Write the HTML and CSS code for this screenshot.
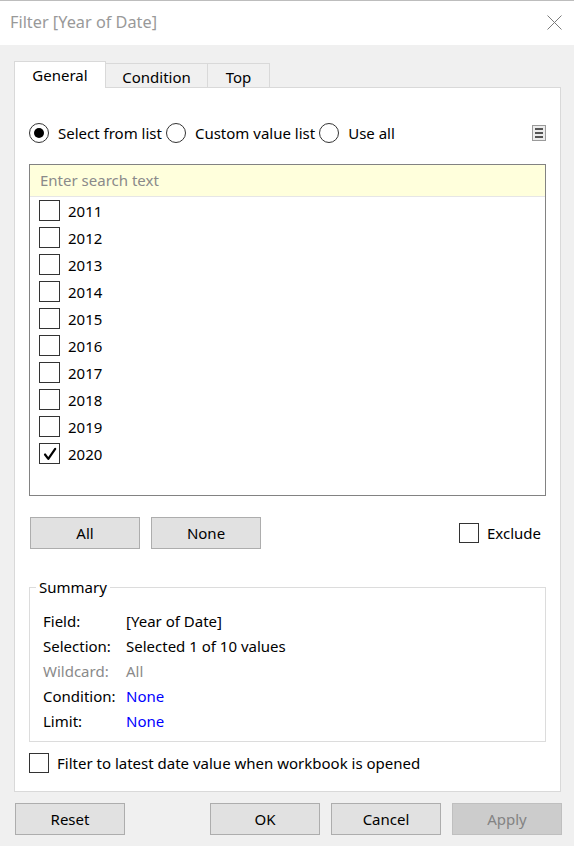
FILE: index.html
```html
<!DOCTYPE html>
<html>
<head>
<meta charset="utf-8">
<link rel="stylesheet" href="styles.css">
</head>
<body>
<div class="window">
  <div class="titlebar">
    <span class="title">Filter [Year of Date]</span>
    <svg class="close" width="15" height="15" viewBox="0 0 15 15"><path d="M0.5 0.5 L14.5 14.5 M14.5 0.5 L0.5 14.5" stroke="#7a7a7a" stroke-width="1" fill="none"/></svg>
  </div>
  <div class="main">
    <div class="tabs">
      <div class="tab active">General</div>
      <div class="tab tab-condition">Condition</div>
      <div class="tab tab-top">Top</div>
    </div>
    <div class="panel">
      <div class="radio-row">
        <div class="radio-opt"><span class="radio checked"></span><span>Select from list</span></div>
        <div class="radio-opt"><span class="radio"></span><span>Custom value list</span></div>
        <div class="radio-opt"><span class="radio"></span><span>Use all</span></div>
        <div class="menu-btn"><span></span><span></span><span></span></div>
      </div>
      <div class="listbox">
        <div class="search">Enter search text</div>
        <div class="items">
          <div class="item"><span class="cb"></span><span>2011</span></div>
          <div class="item"><span class="cb"></span><span>2012</span></div>
          <div class="item"><span class="cb"></span><span>2013</span></div>
          <div class="item"><span class="cb"></span><span>2014</span></div>
          <div class="item"><span class="cb"></span><span>2015</span></div>
          <div class="item"><span class="cb"></span><span>2016</span></div>
          <div class="item"><span class="cb"></span><span>2017</span></div>
          <div class="item"><span class="cb"></span><span>2018</span></div>
          <div class="item"><span class="cb"></span><span>2019</span></div>
          <div class="item"><span class="cb"><svg width="20" height="20" viewBox="0 0 20 20"><path d="M5 10.5 L8.3 14.8 L15.2 4.8" stroke="#000" stroke-width="2.2" fill="none" stroke-linecap="round" stroke-linejoin="round"/></svg></span><span>2020</span></div>
        </div>
      </div>
      <div class="btn-row">
        <button class="btn">All</button>
        <button class="btn">None</button>
        <label class="exclude"><span class="cb"></span><span>Exclude</span></label>
      </div>
      <fieldset class="summary">
        <legend>Summary</legend>
        <div class="sum-grid">
          <span>Field:</span><span>[Year of Date]</span>
          <span>Selection:</span><span>Selected 1 of 10 values</span>
          <span class="muted">Wildcard:</span><span class="muted">All</span>
          <span>Condition:</span><span class="link">None</span>
          <span>Limit:</span><span class="link">None</span>
        </div>
      </fieldset>
      <div class="latest"><span class="cb"></span><span>Filter to latest date value when workbook is opened</span></div>
    </div>
    <div class="footer">
      <button class="btn">Reset</button>
      <div class="footer-right">
        <button class="btn">OK</button>
        <button class="btn">Cancel</button>
        <button class="btn disabled">Apply</button>
      </div>
    </div>
  </div>
</div>
</body>
</html>
```
FILE: styles.css
```css
* { box-sizing: border-box; }
html, body { margin: 0; padding: 0; }
body {
  width: 574px;
  height: 846px;
  background: #f0f0f0;
  font-family: "Noto Sans", "Open Sans", sans-serif;
  font-size: 15px;
  line-height: 20px;
  color: #000;
  overflow: hidden;
}
.window { width: 574px; height: 846px; }

.titlebar {
  height: 45px;
  border-top: 1px solid #bdbdbd;
  background: #fff;
  display: flex;
  align-items: center;
  padding-left: 10px;
  padding-right: 12px;
}
.title { color: #999; font-size: 16.3px; flex: 1; margin-top: -2px; }
.close { display: block; margin-top: -1px; }

.main { padding-left: 14px; }

.tabs {
  display: flex;
  align-items: flex-end;
  height: 26px;
  margin-top: 16px;
}
.tab {
  height: 24px;
  border-top: 1px solid #d9d9d9;
  border-right: 1px solid #d9d9d9;
  text-align: center;
  line-height: 24px;
  padding-top: 1px;
}
.tab.active {
  width: 92px;
  height: 27px;
  margin-bottom: -1px;
  border: 1px solid #d9d9d9;
  border-bottom: none;
  background: #fff;
  position: relative;
  z-index: 1;
  line-height: 26px;
  padding-top: 0;
}
.tab-condition { width: 102px; }
.tab-top { width: 62px; }

.panel {
  width: 547px;
  height: 705px;
  background: #fff;
  border: 1px solid #d9d9d9;
  padding-left: 14px;
}

.radio-row {
  display: flex;
  align-items: center;
  width: 517px;
  height: 20px;
  margin-top: 35px;
}
.radio-opt { display: flex; align-items: center; gap: 9px; margin-right: 4px; }
.radio {
  width: 20px;
  height: 20px;
  border: 1px solid #333;
  border-radius: 50%;
  display: flex;
  align-items: center;
  justify-content: center;
  flex: none;
}
.radio.checked::after {
  content: "";
  width: 10px;
  height: 10px;
  border-radius: 50%;
  background: #000;
}
.menu-btn {
  margin-left: auto;
  width: 14px;
  height: 16px;
  border: 1px solid #9a9a9a;
  background: #ececec;
  display: flex;
  flex-direction: column;
  justify-content: center;
  align-items: center;
  gap: 2px;
}
.menu-btn span { display: block; width: 8px; height: 2px; background: #555; }

.listbox {
  width: 517px;
  height: 332px;
  margin-top: 21px;
  border: 1px solid #828282;
}
.search {
  height: 32px;
  background: #ffffdc;
  border-bottom: 1px solid #e6e6e6;
  color: #8a8a8a;
  padding-left: 10px;
  line-height: 30px;
}
.item {
  height: 27px;
  display: flex;
  align-items: center;
  gap: 8px;
  padding-left: 9px;
}
.cb {
  width: 21px;
  height: 21px;
  border: 1px solid #333;
  background: #fff;
  flex: none;
  display: flex;
  align-items: center;
  justify-content: center;
}
.cb svg { display: block; flex: none; }

.btn-row {
  display: flex;
  align-items: center;
  width: 517px;
  margin-top: 21px;
  padding-left: 1px;
  gap: 11px;
}
.btn {
  width: 110px;
  height: 32px;
  background: #e1e1e1;
  border: 1px solid #adadad;
  font-family: inherit;
  font-size: 15px;
  color: #000;
  padding: 0;
  line-height: 20px;
}
.btn.disabled { background: #cccccc; border-color: #bfbfbf; color: #838383; }
.exclude { margin-left: auto; display: flex; align-items: center; gap: 8px; padding-right: 5px; }
.exclude .cb { width: 20px; height: 20px; }

.summary {
  width: 517px;
  margin: 28px 0 0 0;
  border: 1px solid #dcdcdc;
  padding: 11px 0 8px 13px;
}
.summary legend {
  padding: 0 3px;
  margin-left: -7px;
  line-height: 20px;
}
.sum-grid {
  display: grid;
  grid-template-columns: 83px 1fr;
  grid-auto-rows: 25px;
  align-items: center;
}
.muted { color: #8a8a8a; }
.link { color: #0000ff; }

.latest {
  display: flex;
  align-items: center;
  gap: 8px;
  margin-top: 11px;
  height: 20px;
}
.latest .cb { width: 20px; height: 20px; }

.footer {
  display: flex;
  margin-top: 11px;
  padding-left: 1px;
  width: 548px;
}
.footer-right { margin-left: auto; display: flex; gap: 11px; }
```
